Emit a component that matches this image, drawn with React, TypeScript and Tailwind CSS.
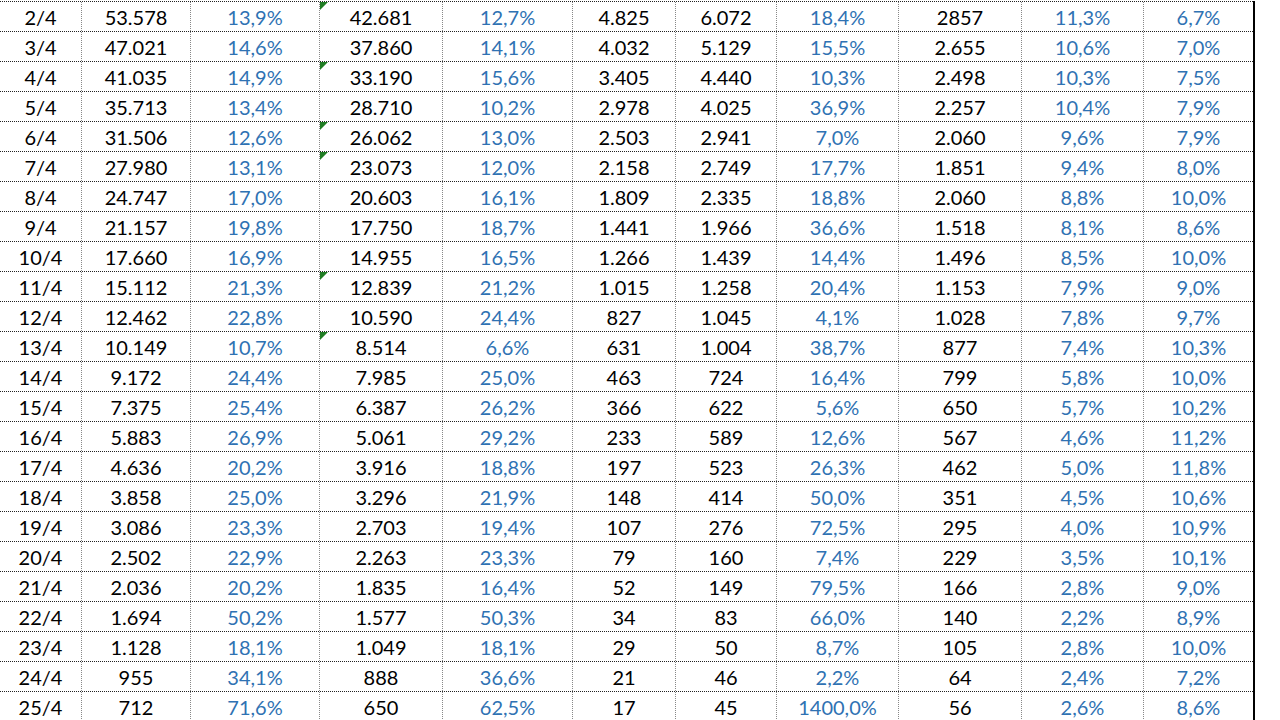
import React from 'react'

const rows: string[][] = [
  ['2/4', '53.578', '13,9%', '42.681', '12,7%', '4.825', '6.072', '18,4%', '2857', '11,3%', '6,7%'],
  ['3/4', '47.021', '14,6%', '37.860', '14,1%', '4.032', '5.129', '15,5%', '2.655', '10,6%', '7,0%'],
  ['4/4', '41.035', '14,9%', '33.190', '15,6%', '3.405', '4.440', '10,3%', '2.498', '10,3%', '7,5%'],
  ['5/4', '35.713', '13,4%', '28.710', '10,2%', '2.978', '4.025', '36,9%', '2.257', '10,4%', '7,9%'],
  ['6/4', '31.506', '12,6%', '26.062', '13,0%', '2.503', '2.941', '7,0%', '2.060', '9,6%', '7,9%'],
  ['7/4', '27.980', '13,1%', '23.073', '12,0%', '2.158', '2.749', '17,7%', '1.851', '9,4%', '8,0%'],
  ['8/4', '24.747', '17,0%', '20.603', '16,1%', '1.809', '2.335', '18,8%', '2.060', '8,8%', '10,0%'],
  ['9/4', '21.157', '19,8%', '17.750', '18,7%', '1.441', '1.966', '36,6%', '1.518', '8,1%', '8,6%'],
  ['10/4', '17.660', '16,9%', '14.955', '16,5%', '1.266', '1.439', '14,4%', '1.496', '8,5%', '10,0%'],
  ['11/4', '15.112', '21,3%', '12.839', '21,2%', '1.015', '1.258', '20,4%', '1.153', '7,9%', '9,0%'],
  ['12/4', '12.462', '22,8%', '10.590', '24,4%', '827', '1.045', '4,1%', '1.028', '7,8%', '9,7%'],
  ['13/4', '10.149', '10,7%', '8.514', '6,6%', '631', '1.004', '38,7%', '877', '7,4%', '10,3%'],
  ['14/4', '9.172', '24,4%', '7.985', '25,0%', '463', '724', '16,4%', '799', '5,8%', '10,0%'],
  ['15/4', '7.375', '25,4%', '6.387', '26,2%', '366', '622', '5,6%', '650', '5,7%', '10,2%'],
  ['16/4', '5.883', '26,9%', '5.061', '29,2%', '233', '589', '12,6%', '567', '4,6%', '11,2%'],
  ['17/4', '4.636', '20,2%', '3.916', '18,8%', '197', '523', '26,3%', '462', '5,0%', '11,8%'],
  ['18/4', '3.858', '25,0%', '3.296', '21,9%', '148', '414', '50,0%', '351', '4,5%', '10,6%'],
  ['19/4', '3.086', '23,3%', '2.703', '19,4%', '107', '276', '72,5%', '295', '4,0%', '10,9%'],
  ['20/4', '2.502', '22,9%', '2.263', '23,3%', '79', '160', '7,4%', '229', '3,5%', '10,1%'],
  ['21/4', '2.036', '20,2%', '1.835', '16,4%', '52', '149', '79,5%', '166', '2,8%', '9,0%'],
  ['22/4', '1.694', '50,2%', '1.577', '50,3%', '34', '83', '66,0%', '140', '2,2%', '8,9%'],
  ['23/4', '1.128', '18,1%', '1.049', '18,1%', '29', '50', '8,7%', '105', '2,8%', '10,0%'],
  ['24/4', '955', '34,1%', '888', '36,6%', '21', '46', '2,2%', '64', '2,4%', '7,2%'],
  ['25/4', '712', '71,6%', '650', '62,5%', '17', '45', '1400,0%', '56', '2,6%', '8,6%'],
]

// column widths incl. right border
const widths = [
  'w-[82px]', 'w-[109px]', 'w-[129px]', 'w-[123px]', 'w-[130px]', 'w-[103px]',
  'w-[101px]', 'w-[122px]', 'w-[123px]', 'w-[122px]', 'w-[109px]',
]
const blueCols = [2, 4, 7, 9, 10]
const flagged = ['2/4', '4/4', '6/4', '7/4', '11/4', '13/4']

export default function App() {
  return (
    <div className="w-[1280px] h-[720px] overflow-hidden bg-white font-['Lato','Open_Sans',sans-serif] text-[20px]">
      <div className="w-[1255px] border-r-2 border-solid border-black">
        <div className="mt-px border-t border-dotted border-[#222]">
          {rows.map((r) => (
            <div key={r[0]} className="flex h-[30px] border-b border-dotted border-[#222]">
              {r.map((v, i) => (
                <div
                  key={i}
                  className={`relative flex items-center justify-center pt-px ${widths[i]} ${
                    i < 10 ? 'border-r border-dotted border-[#888]' : ''
                  } ${blueCols.includes(i) ? 'text-[#2f72b3]' : 'text-black'}`}
                >
                  {i === 3 && flagged.includes(r[0]) && (
                    <span className="absolute left-0 top-0 w-0 h-0 border-t-[8px] border-t-[#1e7b22] border-r-[8px] border-r-transparent" />
                  )}
                  {v}
                </div>
              ))}
            </div>
          ))}
        </div>
      </div>
    </div>
  )
}
